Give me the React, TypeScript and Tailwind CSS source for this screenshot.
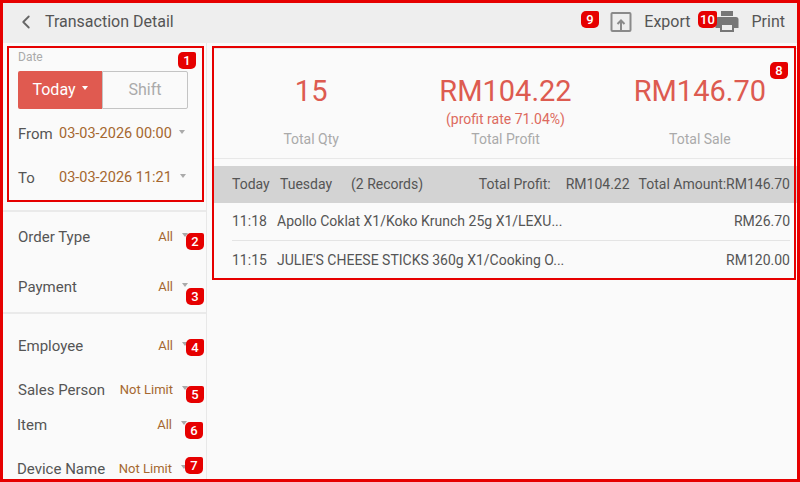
import { ChevronLeft } from "lucide-react";

function Caret({ className = "" }: { className?: string }) {
  return <span className={`w-0 h-0 border-x-[3.5px] border-x-transparent border-t-[4px] border-t-[#aaaaaa] ${className}`} />;
}

function Badge({ text, className }: { text: string; className: string }) {
  return (
    <div className={`absolute h-[17px] bg-[#e60000] rounded-[5px] rounded-tr-[2px] text-white text-[13px] leading-[17px] font-medium text-center ${className}`}>
      {text}
    </div>
  );
}

function FilterRow({ label, value, className }: { label: string; value: string; className: string }) {
  return (
    <div className={`flex items-center pr-[18px] ${className}`}>
      <span className="text-[15px] text-[#555555]">{label}</span>
      <span className="ml-auto text-[13px] text-[#a5672f]">{value}</span>
      <Caret className="ml-[9px] mb-1" />
    </div>
  );
}

function Stat({ value, sub, label }: { value: string; sub?: string; label: string }) {
  return (
    <div className="flex-1 flex flex-col items-center">
      <div className="text-[29px] leading-[38px] text-[#dd5b50]">{value}</div>
      <div className="h-[18px] text-[14px] leading-[18px] text-[#dd6a60]">{sub}</div>
      <div className="mt-[1px] text-[14px] leading-[20px] text-[#aaaaaa]">{label}</div>
    </div>
  );
}

export default function App() {
  return (
    <div className="relative w-[800px] h-[482px] overflow-hidden bg-[#fafafa] font-['Roboto',sans-serif]">
      <header className="h-[43px] bg-[#eeeeee] flex items-center pl-[15px] pr-[15px] text-[#555555]">
        <ChevronLeft size={22} strokeWidth={2} className="text-[#666666]" />
        <span className="ml-[8px] text-[16px]">Transaction Detail</span>
        <div className="ml-auto flex items-center">
          <svg width="22" height="22" viewBox="0 0 22 22" fill="none" className="text-[#8a8a8a]">
            <path d="M7 2H2.5a1 1 0 0 0-1 1v16a1 1 0 0 0 1 1h17a1 1 0 0 0 1-1V3a1 1 0 0 0-1-1H15" stroke="currentColor" strokeWidth="2" />
            <path d="M2 2h18" stroke="currentColor" strokeWidth="2" />
            <path d="M11 19v-9M7.5 13l3.5-3.5 3.5 3.5" stroke="currentColor" strokeWidth="2" />
          </svg>
          <span className="ml-[12px] text-[16px]">Export</span>
          <svg width="24" height="24" viewBox="0 0 24 24" className="ml-[24px] text-[#777777]">
            <path fill="currentColor" d="M6 1h12v5H6zM3 7h18a2.5 2.5 0 0 1 2.5 2.5V18H19v4H5v-4H.5V9.500A2.500 2.500 0 0 1 3 7zm4 8v5h10v-5z" />
          </svg>
          <span className="ml-[13px] text-[16px]">Print</span>
        </div>
      </header>

      <div className="flex h-[439px]">
        <aside className="w-[207px] border-r border-[#e8e8e8] pl-[18px] pt-[7px] shrink-0">
          <div className="text-[12px] leading-[14px] text-[#aaaaaa]">Date</div>
          <div className="mt-[7px] flex w-[170px] h-[38px] text-[16px]">
            <div className="w-[84px] bg-[#e05a50] text-white rounded-l-[2px] flex items-center justify-center">
              Today
              <Caret className="ml-[6px] mb-1 border-t-white" />
            </div>
            <div className="flex-1 border border-[#c4c4c4] rounded-r-[2px] text-[#aaaaaa] flex items-center justify-center">Shift</div>
          </div>
          <div className="mt-[3px] h-[44px] flex items-center text-[15px] text-[#555555]">
            <span className="w-[41px]">From</span>
            <span className="text-[14.500px] text-[#a5672f]">03-03-2026 00:00</span>
            <Caret className="ml-[7px] mb-1" />
          </div>
          <div className="h-[44px] flex items-center text-[15px] text-[#555555]">
            <span className="w-[41px]">To</span>
            <span className="text-[14.500px] text-[#a5672f]">03-03-2026 11:21</span>
            <Caret className="ml-[8px] mb-1" />
          </div>
          <div className="-ml-[18px] mt-[10px] border-t-2 border-[#eaeaea]" />
          <FilterRow label="Order Type" value="All" className="h-[50px]" />
          <FilterRow label="Payment" value="All" className="h-[50px]" />
          <div className="-ml-[18px] border-t-2 border-[#eaeaea]" />
          <FilterRow label="Employee" value="All" className="mt-[10px] h-[44px]" />
          <FilterRow label="Sales Person" value="Not Limit" className="h-[44px]" />
          <FilterRow label="Item" value="All" className="-ml-[1px] h-[26px] pr-[19px]" />
          <FilterRow label="Device Name" value="Not Limit" className="-ml-[1px] mt-[18px] h-[26px] pr-[19px]" />
        </aside>

        <main className="flex-1 pl-[7px] pr-[3px] pt-[5px]">
          <div className="h-[111px] border-y border-[#e8e8e8] flex pt-[23px]">
            <Stat value="15" label="Total Qty" />
            <Stat value="RM104.22" sub="(profit rate 71.04%)" label="Total Profit" />
            <Stat value="RM146.70" label="Total Sale" />
          </div>
          <div className="mt-[7px] h-[37px] bg-[#d3d3d3] flex items-center pl-[18px] pr-[7px] text-[14px] text-[#555555]">
            <span className="w-[48px]">Today</span>
            <span className="w-[71px]">Tuesday</span>
            <span>(2 Records)</span>
            <span className="ml-auto">Total Profit:</span>
            <span className="ml-[15px]">RM104.22</span>
            <span className="ml-[9px]">Total Amount:RM146.70</span>
          </div>
          <div className="pl-[18px] pr-[7px] text-[14px] text-[#555555]">
            <div className="h-[38px] flex items-center border-b border-[#e4e4e4]">
              <span className="w-[45px]">11:18</span>
              <span>Apollo Coklat X1/Koko Krunch 25g X1/LEXU...</span>
              <span className="ml-auto">RM26.70</span>
            </div>
            <div className="h-[38px] flex items-center">
              <span className="w-[45px]">11:15</span>
              <span>JULIE'S CHEESE STICKS 360g X1/Cooking O...</span>
              <span className="ml-auto">RM120.00</span>
            </div>
          </div>
        </main>
      </div>

      {/* annotation boxes drawn over the screenshot */}
      <div className="absolute inset-0 border-[3px] border-[#e60000] pointer-events-none" />
      <div className="absolute left-[7px] top-[46px] w-[197px] h-[156px] border-2 border-[#e60000]" />
      <div className="absolute left-[212px] top-[46px] w-[584px] h-[234px] border-2 border-[#e60000]" />
      <Badge text="1" className="left-[178px] top-[52px] w-[18px]" />
      <Badge text="2" className="left-[186px] top-[233px] w-[18px]" />
      <Badge text="3" className="left-[186px] top-[288px] w-[18px]" />
      <Badge text="4" className="left-[186px] top-[339px] w-[18px]" />
      <Badge text="5" className="left-[186px] top-[386px] w-[18px]" />
      <Badge text="6" className="left-[185px] top-[422px] w-[18px]" />
      <Badge text="7" className="left-[185px] top-[457px] w-[18px]" />
      <Badge text="8" className="left-[770px] top-[62px] w-[18px]" />
      <Badge text="9" className="left-[581px] top-[11px] w-[18px]" />
      <Badge text="10" className="left-[698px] top-[11px] w-[19px]" />
    </div>
  );
}
